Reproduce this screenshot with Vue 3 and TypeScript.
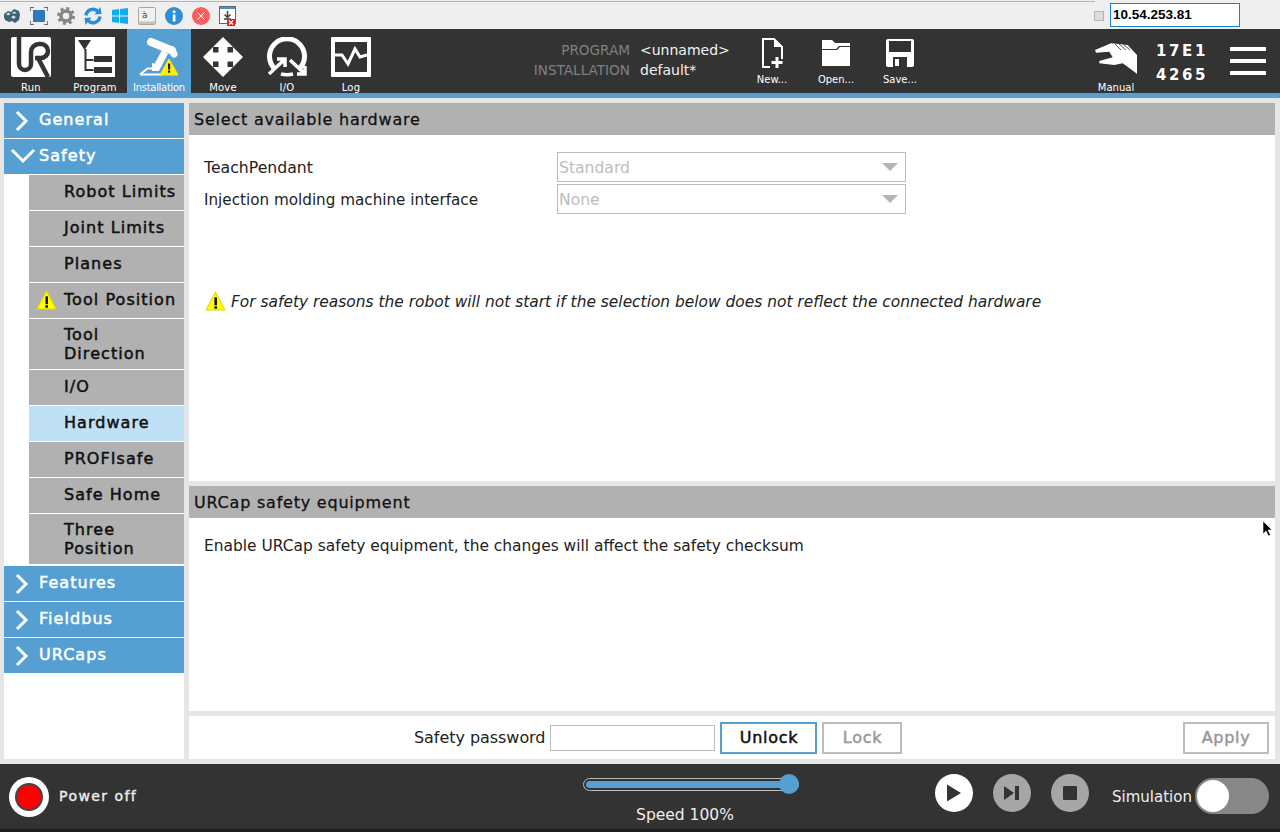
<script setup lang="ts">
interface NavItem {
  label: string
  sub?: boolean
  open?: boolean
  warn?: boolean
  active?: boolean
  tall?: boolean
}

const navItems: NavItem[] = [
  { label: 'General' },
  { label: 'Safety', open: true },
  { label: 'Robot Limits', sub: true },
  { label: 'Joint Limits', sub: true },
  { label: 'Planes', sub: true },
  { label: 'Tool Position', sub: true, warn: true },
  { label: 'Tool Direction', sub: true, tall: true },
  { label: 'I/O', sub: true },
  { label: 'Hardware', sub: true, active: true },
  { label: 'PROFIsafe', sub: true },
  { label: 'Safe Home', sub: true },
  { label: 'Three Position', sub: true, tall: true },
  { label: 'Features' },
  { label: 'Fieldbus' },
  { label: 'URCaps' }
]
</script>

<template>
  <div class="screen">
    <!-- remote viewer toolbar -->
    <div class="os-bar">
      <div class="os-icons">
        <svg class="os-icon" viewBox="0 0 18 18"><path d="M1 7l4-3 3 1 3-3 5 2 1 4-1 5-4 3-3-2-3 1-4-2-1-3z" fill="#3f6274"/><path d="M3 7l2.500-1.500 2 1.500-2.500 1.500zM11 4.500l2.500 1-2 1.500-2.500-1zM8 10l2.500-1.500 2.500 1.500-2.500 2z" fill="#cfdde4"/></svg>
        <svg class="os-icon" viewBox="0 0 18 18"><rect x="3" y="3" width="12" height="12" fill="#2f78c4"/><path d="M0 4V0h4M14 0h4v4M18 14v4h-4M4 18H0v-4" fill="none" stroke="#40505c" stroke-width="1.400"/></svg>
        <svg class="os-icon" viewBox="0 0 18 18"><circle cx="9" cy="9" r="5" fill="none" stroke="#868686" stroke-width="3.500"/><circle cx="9" cy="9" r="7.500" fill="none" stroke="#868686" stroke-width="3" stroke-dasharray="3 2.900"/></svg>
        <svg class="os-icon" viewBox="0 0 18 18"><path d="M2 8.500a7 7 0 0 1 12-4" fill="none" stroke="#2a8fd8" stroke-width="3.400"/><path d="M10.500 7.500l7-.5-1-7z" fill="#2a8fd8"/><path d="M16 9.500a7 7 0 0 1-12 4" fill="none" stroke="#2a8fd8" stroke-width="3.400"/><path d="M7.500 10.500l-7 .5 1 7z" fill="#2a8fd8"/></svg>
        <svg class="os-icon" viewBox="0 0 18 18"><path d="M1 3l7-1v6.500H1zM9 2l8-1v7.500H9zM1 9.500h7V16l-7-1zM9 9.500h8V17l-8-1z" fill="#10aef0"/></svg>
        <svg class="os-icon" viewBox="0 0 18 18"><rect x="0.500" y="0.500" width="17" height="17" rx="1" fill="#f0f0ec" stroke="#a8a8a0"/><rect x="1" y="14.500" width="16" height="2.500" fill="#c4c4bc"/><text x="4" y="11" class="key-glyph">à</text></svg>
        <svg class="os-icon" viewBox="0 0 18 18"><circle cx="9" cy="9" r="9" fill="#2f8fd4"/><rect x="7.800" y="7.500" width="2.600" height="7" fill="#fff"/><circle cx="9.100" cy="4.800" r="1.500" fill="#fff"/></svg>
        <svg class="os-icon" viewBox="0 0 18 18"><circle cx="9" cy="9" r="9" fill="#fb5c5c"/><path d="M5.500 5.500l7 7M12.500 5.500l-7 7" stroke="#fff" stroke-width="1"/></svg>
        <svg class="os-icon os-icon-tall" viewBox="0 0 18 20"><rect x="0.500" y="0.500" width="16" height="17" fill="#fff" stroke="#666"/><rect x="1" y="1" width="15" height="2" fill="#4a90c8"/><path d="M8.500 5v6M5.500 8.500l3 3 3-3M5 13h7" fill="none" stroke="#444" stroke-width="1.500"/><rect x="8" y="13" width="8" height="7" fill="#e02020"/><path d="M10 14.500l4 4M14 14.500l-4 4" stroke="#fff" stroke-width="1.500"/></svg>
      </div>
      <span class="ip-check"></span>
      <div class="ip-box">10.54.253.81</div>
    </div>

    <!-- polyscope header -->
    <header class="top-bar">
      <div class="tabs">
        <div class="tab">
          <svg class="tab-icon" viewBox="0 0 40 40"><rect width="40" height="40" rx="2" fill="#fff"/><path d="M8 0v27a6 6 0 0 0 12 0V15a8 8 0 0 1 8-8h2a7 7 0 0 1 0 14h-6M27 21l10 19" fill="none" stroke="#333" stroke-width="4.500"/></svg>
          <span>Run</span>
        </div>
        <div class="tab">
          <svg class="tab-icon" viewBox="0 0 40 40"><rect width="40" height="40" fill="#fff"/><path d="M3 3h13l-6.500 10z" fill="#333"/><path d="M10.500 12v22M10.500 23h8M10.500 33h8" stroke="#333" stroke-width="2" fill="none"/><rect x="19" y="19" width="18" height="6" fill="#333"/><rect x="19" y="30" width="18" height="6" fill="#333"/></svg>
          <span>Program</span>
        </div>
        <div class="tab tab-active">
          <svg class="tab-icon tab-icon-wide" viewBox="0 0 50 40"><path d="M17 5L38 13.500" stroke="#fff" stroke-width="8" stroke-linecap="round" fill="none"/><path d="M38 13L40 17" stroke="#fff" stroke-width="7" stroke-linecap="round" fill="none"/><path d="M31 15L24 28" stroke="#fff" stroke-width="7" fill="none"/><path d="M18 26l10 2-3 6h-7z" fill="#fff"/><path d="M6 37.500l7.500-6H24M6 37.500h22" fill="none" stroke="#fff" stroke-width="1.800"/><path d="M35 22l9 16H26z" fill="#ffef00" stroke="#ffef00" stroke-linejoin="round"/><rect x="34" y="26.500" width="2.200" height="6" fill="#222"/><rect x="34" y="33.500" width="2.200" height="2.200" fill="#222"/></svg>
          <span>Installation</span>
        </div>
        <div class="tab">
          <svg class="tab-icon" viewBox="0 0 40 40"><path d="M20 0L30 10H24.500V15.500H30V10L40 20 30 30V24.500H24.500V30H30L20 40 10 30H15.500V24.500H10V30L0 20 10 10V15.500H15.500V10H10Z" fill="#fff"/></svg>
          <span>Move</span>
        </div>
        <div class="tab">
          <svg class="tab-icon" viewBox="0 0 40 40"><path d="M7 31A17.500 17.500 0 1 1 33 31" fill="none" stroke="#fff" stroke-width="5"/><path d="M14 37Q20 38.500 26 37" fill="none" stroke="#fff" stroke-width="3.500"/><path d="M2 37L17 23M10 22h8v8M23 23L38 37M38 29v8h-8" fill="none" stroke="#fff" stroke-width="3.500"/></svg>
          <span>I/O</span>
        </div>
        <div class="tab">
          <svg class="tab-icon" viewBox="0 0 40 40"><rect width="40" height="40" rx="1" fill="#fff"/><rect x="4" y="5" width="32" height="30" fill="#333"/><path d="M4 18h7l6 9 7-15 5 8 7-2" fill="none" stroke="#fff" stroke-width="3"/></svg>
          <span>Log</span>
        </div>
      </div>

      <div class="file-info">
        <span class="file-key">PROGRAM</span><span class="file-val">&lt;unnamed&gt;</span>
        <span class="file-key">INSTALLATION</span><span class="file-val">default*</span>
      </div>

      <div class="file-actions">
        <div class="file-btn">
          <svg class="file-icon" viewBox="0 0 32 32"><path d="M14 29H7V1h11l8 8v12" fill="none" stroke="#fff" stroke-width="2"/><path d="M18 1l8 8h-8z" fill="#fff"/><path d="M21 19v11M15.500 24.500h11" stroke="#fff" stroke-width="3"/></svg>
          <span>New...</span>
        </div>
        <div class="file-btn">
          <svg class="file-icon" viewBox="0 0 32 32"><path d="M2 2h10l3 3h15v3H19l-3 3H2z" fill="#fff"/><path d="M2 12h15l3-3h10v19H2z" fill="#fff"/></svg>
          <span>Open...</span>
        </div>
        <div class="file-btn">
          <svg class="file-icon" viewBox="0 0 32 32"><path d="M4 1h24a2 2 0 0 1 2 2v24a2 2 0 0 1-2 2H4a2 2 0 0 1-2-2V3a2 2 0 0 1 2-2z" fill="#fff"/><rect x="5" y="3" width="22" height="11" fill="#333"/><rect x="9" y="19" width="14" height="10" fill="#333"/><rect x="11" y="21" width="4" height="7" fill="#fff"/></svg>
          <span>Save...</span>
        </div>
      </div>

      <div class="mode">
        <svg class="hand" viewBox="0 0 44 32"><path d="M1 7L17 .3 33.700 2 43 12V31L40.300 28.700 28.700 20.300 20.300 22 5.300 20.300V18L18.700 14.300 15.300 8.700 2 9.700Z" fill="#fff"/><path d="M25 1l7 6M29 1l7 6M21 1l6 6" stroke="#333" stroke-width="0.800"/></svg>
        <span>Manual</span>
      </div>
      <div class="serial"><span>17E1</span><span>4265</span></div>
      <div class="burger"><i></i><i></i><i></i></div>
    </header>

    <div class="main">
      <aside class="sidebar">
        <div
          v-for="item in navItems"
          :key="item.label"
          :class="['nav-row', { 'nav-sub': item.sub, 'nav-tall': item.tall, 'nav-active': item.active }]"
        >
          <svg v-if="!item.sub" class="chevron" viewBox="0 0 30 24">
            <path v-if="item.open" d="M5 5l11 11L27 5" fill="none" stroke="#fff" stroke-width="3" />
            <path v-else d="M10 3l9 9-9 9" fill="none" stroke="#fff" stroke-width="3" />
          </svg>
          <svg v-if="item.warn" class="warn nav-warn" viewBox="0 0 20 20"><path d="M10 1l9 17H1z" fill="#ffff00" stroke="#e6d800" stroke-linejoin="round"/><rect x="9" y="6" width="2.400" height="7.500" fill="#111"/><rect x="9" y="14.500" width="2.400" height="2.400" fill="#111"/></svg>
          <span class="nav-label">{{ item.label }}</span>
        </div>
      </aside>

      <div class="content">
        <section class="panel panel-hardware">
          <h2 class="panel-title">Select available hardware</h2>
          <div class="form">
            <label>TeachPendant</label>
            <div class="select"><span>Standard</span><i class="caret"></i></div>
            <label class="label-tight">Injection molding machine interface</label>
            <div class="select"><span>None</span><i class="caret"></i></div>
          </div>
          <p class="notice">
            <svg class="warn" viewBox="0 0 20 20"><path d="M10 1l9 17H1z" fill="#ffff00" stroke="#e6d800" stroke-linejoin="round"/><rect x="9" y="6" width="2.400" height="7.500" fill="#111"/><rect x="9" y="14.500" width="2.400" height="2.400" fill="#111"/></svg>
            <em>For safety reasons the robot will not start if the selection below does not reflect the connected hardware</em>
          </p>
        </section>

        <section class="panel panel-urcap">
          <h2 class="panel-title">URCap safety equipment</h2>
          <p class="urcap-text">Enable URCap safety equipment, the changes will affect the safety checksum</p>
        </section>

        <section class="panel password-row">
          <span class="pw-label">Safety password</span>
          <div class="pw-input"></div>
          <div class="btn btn-primary">Unlock</div>
          <div class="btn">Lock</div>
          <div class="btn btn-apply">Apply</div>
        </section>
      </div>
    </div>

    <footer class="footer">
      <div class="power">
        <span class="power-btn"><i></i></span>
        <span class="power-label">Power off</span>
      </div>
      <div class="speed">
        <div class="slider"><div class="slider-fill"></div><i class="slider-thumb"></i></div>
        <span>Speed 100%</span>
      </div>
      <div class="transport">
        <span class="round round-on"><svg viewBox="0 0 20 20"><path d="M3 1.500l14 8.500-14 8.500z" fill="#333"/></svg></span>
        <span class="round"><svg viewBox="0 0 20 20"><path d="M2 3l10 7-10 7z" fill="#333"/><rect x="13" y="3" width="4" height="14" fill="#333"/></svg></span>
        <span class="round"><svg viewBox="0 0 20 20"><rect x="3" y="3" width="14" height="14" rx="1" fill="#333"/></svg></span>
      </div>
      <span class="sim-label">Simulation</span>
      <div class="toggle"><i></i></div>
    </footer>

    <svg class="cursor" viewBox="0 0 12 18"><path d="M1 1v13l3-3 2.500 5 2-1-2.500-5h4z" fill="#000" stroke="#fff" stroke-width="0.600"/></svg>
  </div>
</template>

<style>
html, body {
  margin: 0;
  overflow: hidden;
}
</style>

<style scoped>
.screen {
  position: relative;
  width: 1280px;
  height: 832px;
  display: flex;
  flex-direction: column;
  background: #e6e6e6;
  font-family: "DejaVu Sans", sans-serif;
  color: #111;
  overflow: hidden;
}

/* viewer bar */
.os-bar {
  position: relative;
  height: 29px;
  flex-shrink: 0;
  display: flex;
  align-items: center;
  background: #efefef;
}
.os-bar::before {
  content: "";
  position: absolute;
  left: 0;
  top: 1px;
  width: 1095px;
  height: 1px;
  background: #b4b4b4;
}
.os-icons {
  display: flex;
  align-items: center;
  gap: 9px;
  padding: 3px 0 0 3px;
}
.os-icon {
  width: 18px;
  height: 18px;
  display: block;
}
.os-icon-tall {
  height: 20px;
}
.key-glyph {
  font-size: 9px;
  fill: #444;
}
.ip-check {
  width: 8px;
  height: 8px;
  margin-left: auto;
  margin-right: 6px;
  margin-top: 3px;
  background: #dcdcdc;
  border: 1px solid #b4b4b4;
}
.ip-box {
  width: 130px;
  height: 24px;
  margin-right: 40px;
  margin-top: 1px;
  padding-left: 2px;
  box-sizing: border-box;
  border: 1px solid #1d7fd0;
  background: #fff;
  color: #000;
  font-family: "Liberation Sans", sans-serif;
  font-weight: 700;
  font-size: 13.5px;
  line-height: 22px;
}

/* header */
.top-bar {
  height: 64px;
  flex-shrink: 0;
  display: flex;
  background: #333;
  border-bottom: 5px solid #559fd3;
  color: #fff;
}
.tabs {
  display: flex;
  margin-left: -1px;
}
.tab {
  width: 64px;
  display: flex;
  flex-direction: column;
  align-items: center;
  padding-top: 8px;
  box-sizing: border-box;
  font-size: 10px;
}
.tab span {
  margin-top: 4px;
  line-height: 13px;
  letter-spacing: 0.2px;
  white-space: nowrap;
}
.tab-icon {
  width: 40px;
  height: 40px;
  display: block;
  flex-shrink: 0;
}
.tab-icon-wide {
  width: 50px;
}
.tab-active {
  background: #559fd3;
}
.tab-active span {
  letter-spacing: -0.3px;
}
.file-info {
  display: grid;
  grid-template-columns: 247px auto;
  column-gap: 10px;
  align-content: start;
  align-items: baseline;
  padding-top: 11px;
  line-height: 20px;
}
.file-key {
  text-align: right;
  color: #808080;
  font-size: 13.6px;
}
.file-val {
  color: #f2f2f2;
  font-size: 14px;
}
.file-actions {
  position: absolute;
  left: 740px;
  top: 29px;
  display: flex;
}
.file-btn {
  width: 64px;
  display: flex;
  flex-direction: column;
  align-items: center;
  padding-top: 9px;
  font-size: 10px;
}
.file-btn span {
  margin-top: 3px;
  line-height: 13px;
}
.file-icon {
  width: 32px;
  height: 32px;
  display: block;
}
.mode {
  position: absolute;
  left: 1084px;
  top: 29px;
  width: 64px;
  display: flex;
  flex-direction: column;
  align-items: center;
  padding-top: 14px;
  font-size: 10px;
}
.mode span {
  margin-top: 7px;
  line-height: 13px;
}
.hand {
  width: 44px;
  height: 32px;
  margin-bottom: -1px;
  display: block;
}
.serial {
  position: absolute;
  left: 1156px;
  top: 39px;
  display: flex;
  flex-direction: column;
  font-size: 15px;
  font-weight: 700;
  letter-spacing: 2.6px;
  line-height: 24px;
}
.burger {
  position: absolute;
  left: 1230px;
  top: 47px;
  width: 36px;
  display: flex;
  flex-direction: column;
  gap: 8px;
}
.burger i {
  display: block;
  height: 4px;
  background: #fff;
}

/* main area */
.main {
  flex: 1;
  display: flex;
  min-height: 0;
  padding: 5px 5px 5px 4px;
  gap: 5px;
}
.sidebar {
  width: 180px;
  flex-shrink: 0;
  display: flex;
  flex-direction: column;
  gap: 1px;
  background: #fff;
}
.nav-row {
  position: relative;
  height: 35px;
  box-sizing: border-box;
  padding-bottom: 2px;
  flex-shrink: 0;
  display: flex;
  align-items: center;
  background: #559fd3;
  color: #fff;
  font-size: 16px;
  letter-spacing: 1.05px;
  -webkit-text-stroke: 0.5px currentColor;
}
.nav-sub + .nav-row:not(.nav-sub) {
  margin-top: 1px;
}
.nav-label {
  margin-left: 35px;
  white-space: nowrap;
}
.chevron {
  position: absolute;
  left: 3px;
  top: 6px;
  width: 30px;
  height: 24px;
}
.nav-sub {
  margin-left: 25px;
  background: #b1b1b1;
  color: #111;
}
.nav-tall {
  height: 50px;
  padding-bottom: 0;
}
.nav-tall .nav-label {
  width: 90px;
  line-height: 19px;
  white-space: normal;
}
.nav-active {
  background: #c0e0f6;
}
.warn {
  width: 21px;
  height: 21px;
  flex-shrink: 0;
}
.nav-warn {
  position: absolute;
  left: 7px;
  top: 7px;
}

/* content */
.content {
  flex: 1;
  display: flex;
  flex-direction: column;
  gap: 5px;
  min-width: 0;
}
.panel {
  background: #fff;
}
.panel-hardware {
  height: 378px;
}
.panel-urcap {
  height: 225px;
}
.panel-title {
  margin: 0;
  height: 32px;
  padding-left: 5px;
  background: #b1b1b1;
  font-size: 16px;
  font-weight: 400;
  line-height: 34px;
  letter-spacing: 0.78px;
  -webkit-text-stroke: 0.3px #111;
}
.form {
  display: grid;
  grid-template-columns: 353px 349px;
  row-gap: 2px;
  align-items: center;
  padding: 17px 0 0 15px;
}
.form label {
  font-size: 15.7px;
  color: #222;
}
.form .label-tight {
  padding-top: 2px;
  font-size: 15.2px;
}
.select {
  height: 30px;
  display: flex;
  align-items: center;
  justify-content: space-between;
  box-sizing: border-box;
  padding: 0 7px 0 1px;
  border: 1px solid #bcbcbc;
  color: #bdbdbd;
  font-size: 15.6px;
}
.select span {
  margin-top: 2px;
}
.caret {
  width: 0;
  height: 0;
  border-left: 8px solid transparent;
  border-right: 8px solid transparent;
  border-top: 8px solid #b4b4b4;
}
.notice {
  display: flex;
  align-items: center;
  gap: 5px;
  margin: 77px 0 0 16px;
  font-size: 15.43px;
  color: #222;
}
.urcap-text {
  margin: 0;
  padding: 19px 0 0 15px;
  font-size: 15.45px;
  line-height: 19px;
  color: #222;
}
.password-row {
  flex: 1;
  display: flex;
  align-items: center;
  padding-left: 225px;
  padding-right: 6px;
}
.pw-label {
  font-size: 16px;
  letter-spacing: -0.05px;
  color: #222;
}
.pw-input {
  width: 165px;
  height: 26px;
  box-sizing: border-box;
  margin-left: 5px;
  border: 1px solid #bcbcbc;
}
.btn {
  width: 80px;
  height: 32px;
  box-sizing: border-box;
  margin-left: 5px;
  border: 2px solid #bcbcbc;
  color: #999;
  font-size: 16px;
  letter-spacing: 0.7px;
  -webkit-text-stroke: 0.5px currentColor;
  line-height: 28px;
  text-align: center;
}
.btn-primary {
  width: 97px;
  border-color: #559fd3;
  color: #111;
}
.btn-apply {
  width: 86px;
  margin-left: auto;
}

/* footer */
.footer {
  position: relative;
  height: 65px;
  flex-shrink: 0;
  display: flex;
  align-items: center;
  background: #333;
  border-bottom: 3px solid #1c1c1c;
  color: #eee;
}
.power {
  display: flex;
  align-items: center;
  padding-left: 9px;
}
.power-btn {
  width: 40px;
  height: 40px;
  box-sizing: border-box;
  display: flex;
  align-items: center;
  justify-content: center;
  border-radius: 50%;
  background: #fff;
}
.power-btn i {
  width: 28px;
  height: 28px;
  border: 2px solid #444;
  box-sizing: border-box;
  border-radius: 50%;
  background: #f00;
}
.power-label {
  margin-left: 10px;
  margin-bottom: 2px;
  font-size: 14px;
  letter-spacing: 1.45px;
  -webkit-text-stroke: 0.4px currentColor;
}
.speed {
  position: absolute;
  left: 583px;
  top: 14px;
  width: 216px;
  display: flex;
  flex-direction: column;
  align-items: center;
  font-size: 15.5px;
}
.speed span {
  margin-top: 15px;
  margin-left: -12px;
}
.slider {
  position: relative;
  width: 100%;
  height: 13px;
  box-sizing: border-box;
  border: 1px solid #bbb;
  border-radius: 7px;
  padding: 2px;
}
.slider-fill {
  width: 97%;
  height: 100%;
  background: #559fd3;
  border-radius: 4px;
}
.slider-thumb {
  position: absolute;
  right: -1px;
  top: -5px;
  width: 20px;
  height: 20px;
  border-radius: 50%;
  background: #559fd3;
}
.transport {
  position: absolute;
  left: 935px;
  top: 10px;
  display: flex;
  gap: 20px;
}
.round {
  width: 38px;
  height: 38px;
  display: flex;
  align-items: center;
  justify-content: center;
  border-radius: 50%;
  background: #a6a6a6;
}
.round svg {
  width: 20px;
  height: 20px;
}
.round-on {
  background: #fff;
}
.sim-label {
  position: absolute;
  left: 1112px;
  top: 24px;
  font-size: 15px;
}
.toggle {
  position: absolute;
  left: 1195px;
  top: 14px;
  width: 74px;
  height: 36px;
  border-radius: 18px;
  background: #888;
}
.toggle i {
  position: absolute;
  left: 2px;
  top: 2px;
  width: 32px;
  height: 32px;
  border-radius: 50%;
  background: #fff;
}
.cursor {
  position: absolute;
  left: 1262px;
  top: 520px;
  width: 12px;
  height: 18px;
}
</style>
